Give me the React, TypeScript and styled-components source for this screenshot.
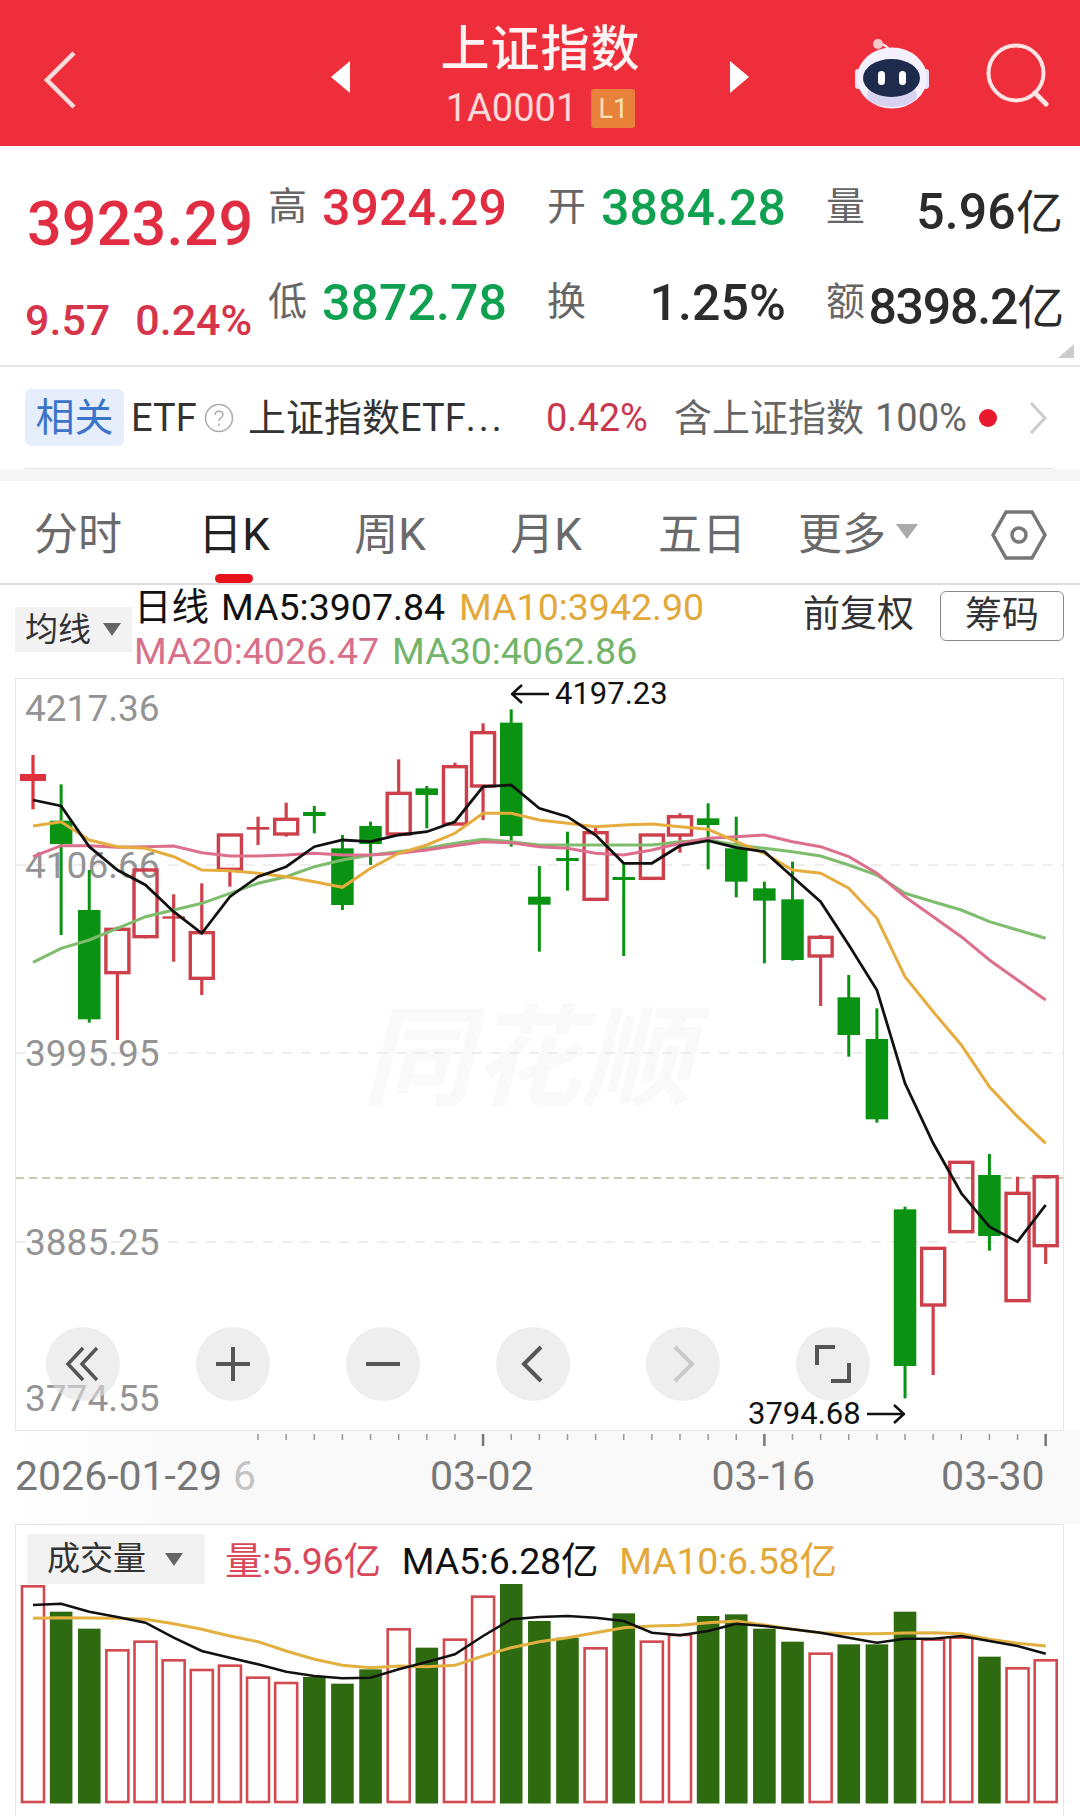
import React from "react";
import styled, { createGlobalStyle } from "styled-components";

const FONT = `Roboto, "Noto Sans CJK SC", "Noto Sans", sans-serif`;
const RED = "#e12d41";
const GREEN = "#0fa14f";
const DARK = "#2b2b2b";

const Global = createGlobalStyle`
  html, body { margin: 0; padding: 0; background: #fff; }
  body { font-family: ${FONT}; }
  * { box-sizing: border-box; }
`;

const Page = styled.div`
  width: 1080px;
  height: 1816px;
  overflow: hidden;
  background: #fff;
  display: flex;
  flex-direction: column;
`;

/* ---------- header ---------- */
const Header = styled.header`
  height: 146px;
  flex: none;
  background: #ee2f3b;
  display: flex;
  align-items: flex-start;
  color: #fff;
`;
const BackIcon = styled.svg`
  width: 32px;
  height: 60px;
  margin: 50px 0 0 44px;
  flex: none;
`;
const StepIcon = styled.svg`
  width: 20px;
  height: 32px;
  margin-top: 61px;
  flex: none;
`;
const PrevStep = styled(StepIcon)`
  margin-left: 255px;
`;
const TitleBlock = styled.div`
  width: 379px;
  flex: none;
  display: flex;
  flex-direction: column;
  align-items: center;
  padding-top: 21px;
`;
const Title = styled.div`
  font-size: 49px;
  line-height: 58px;
  font-weight: 500;
  letter-spacing: 1px;
  color: #fdf3f3;
`;
const SubRow = styled.div`
  display: flex;
  align-items: center;
  margin-top: 10px;
  gap: 14px;
`;
const Code = styled.span`
  font-size: 38px;
  line-height: 39px;
  color: rgba(255, 255, 255, 0.82);
`;
const LevelBadge = styled.span`
  width: 44px;
  height: 39px;
  background: #e8823a;
  border-radius: 3px;
  display: flex;
  align-items: center;
  justify-content: center;
  font-size: 27px;
  color: #f9e2b8;
`;
const RobotIcon = styled.svg`
  width: 80px;
  height: 72px;
  margin: 38px 0 0 102px;
  flex: none;
`;
const SearchIcon = styled.svg`
  width: 66px;
  height: 66px;
  margin: 41px 0 0 53px;
  flex: none;
`;

/* ---------- quote ---------- */
const Quote = styled.section`
  position: relative;
  height: 221px;
  flex: none;
  border-bottom: 2px solid #e6e6e6;
  display: flex;
  padding-left: 25px;
`;
const PriceCol = styled.div`
  width: 244px;
  flex: none;
`;
const MainPrice = styled.div`
  font-size: 61px;
  line-height: 70px;
  font-weight: 500;
  color: ${RED};
  margin: 43px 0 0 2px;
  letter-spacing: 0.2px;
`;
const Change = styled.div`
  font-size: 43px;
  line-height: 50px;
  font-weight: 500;
  color: #d5344a;
  margin-top: 36px;
  display: flex;
  gap: 25px;
`;
const Stats = styled.div`
  display: grid;
  grid-template-columns: 238px 238px 236px;
  column-gap: 41px;
  grid-auto-rows: 95px;
  padding-top: 15px;
`;
const Stat = styled.div`
  display: flex;
  align-items: center;
  justify-content: space-between;
  height: 94px;
`;
const StatLabel = styled.span`
  font-size: 39px;
  line-height: 46px;
  padding-bottom: 2px;
  margin-left: -1px;
  color: #666;
`;
const StatValue = styled.span<{ $c: string; $ls?: number }>`
  font-size: 50px;
  font-weight: 500;
  letter-spacing: ${(p) => p.$ls ?? 0.1}px;
  color: ${(p) => p.$c};
  white-space: nowrap;
`;
const Unit = styled.span`
  font-weight: 400;
  font-size: 47px;
`;
const Corner = styled.div`
  position: absolute;
  right: 6px;
  bottom: 7px;
  width: 0;
  height: 0;
  border-left: 16px solid transparent;
  border-bottom: 14px solid #ccc;
`;

/* ---------- etf row ---------- */
const EtfRow = styled.section`
  height: 102px;
  flex: none;
  margin: 0 26px 0 25px;
  border-bottom: 1px solid #e4e4e4;
  display: flex;
  align-items: center;
  font-size: 38px;
  white-space: nowrap;
`;
const Chip = styled.span`
  width: 99px;
  height: 57px;
  background: #e6eefc;
  border-radius: 6px;
  color: #3b74c8;
  font-size: 39px;
  line-height: 44px;
  display: flex;
  align-items: center;
  justify-content: center;
  flex: none;
`;
const EtfText = styled.span<{ $w: number; $ml: number; $c: string }>`
  width: ${(p) => p.$w}px;
  margin-left: ${(p) => p.$ml}px;
  color: ${(p) => p.$c};
  line-height: 44px;
  flex: none;
`;
const Dots = styled.span`
  letter-spacing: 3px;
`;
const HelpIcon = styled.svg`
  width: 30px;
  height: 30px;
  margin-left: 9px;
  flex: none;
`;
const Dot = styled.span`
  width: 18px;
  height: 18px;
  border-radius: 50%;
  background: #e8192c;
  margin-left: 14px;
  flex: none;
`;
const EtfChevron = styled.svg`
  width: 19px;
  height: 34px;
  margin-left: 32px;
  flex: none;
`;
const Gap = styled.div`
  height: 12px;
  flex: none;
  background: #f6f6f6;
`;

/* ---------- tabs ---------- */
const Tabs = styled.nav`
  height: 104px;
  flex: none;
  border-bottom: 2px solid #dedede;
  display: flex;
  align-items: flex-start;
  padding-right: 33px;
`;
const Tab = styled.div<{ $active?: boolean }>`
  position: relative;
  width: 156px;
  height: 102px;
  display: flex;
  align-items: center;
  justify-content: center;
  padding-bottom: 2px;
  font-size: 44px;
  color: ${(p) => (p.$active ? "#222" : "#6a6a6a")};
`;
const Underline = styled.span`
  position: absolute;
  left: 59px;
  bottom: 0;
  width: 38px;
  height: 9px;
  border-radius: 5px;
  background: #e8101a;
`;
const MoreTriangle = styled.span`
  width: 0;
  height: 0;
  margin-left: 10px;
  border-left: 11px solid transparent;
  border-right: 11px solid transparent;
  border-top: 15px solid #aaa;
`;
const HexIcon = styled.svg`
  width: 56px;
  height: 50px;
  margin: 29px 0 0 auto;
  flex: none;
`;

/* ---------- legend ---------- */
const Legend = styled.section`
  height: 93px;
  flex: none;
  padding: 0 16px 0 15px;
  display: flex;
  align-items: flex-start;
`;
const AvgChip = styled.div`
  width: 117px;
  height: 45px;
  margin-top: 22px;
  background: #f2f2f2;
  display: flex;
  align-items: center;
  padding-left: 10px;
  font-size: 33px;
  line-height: 40px;
  color: #333;
  flex: none;
`;
const ChipTriangle = styled.span<{ $ml: number; $c: string }>`
  width: 0;
  height: 0;
  margin-left: ${(p) => p.$ml}px;
  border-left: 9px solid transparent;
  border-right: 9px solid transparent;
  border-top: 13px solid ${(p) => p.$c};
`;
const MaBlock = styled.div`
  margin-left: 2px;
  display: flex;
  flex-direction: column;
  flex: 1;
`;
const MaRow = styled.div`
  height: 44px;
  display: flex;
  align-items: center;
  white-space: nowrap;
`;
const MaText = styled.span<{ $c: string; $ml?: number }>`
  font-size: 37.5px;
  line-height: 44px;
  color: ${(p) => p.$c};
  margin-left: ${(p) => p.$ml ?? 0}px;
`;
const AdjustGroup = styled.div`
  display: flex;
  align-items: flex-start;
  padding-top: 6px;
  flex: none;
`;
const AdjustText = styled.span`
  font-size: 37px;
  line-height: 40px;
  margin-top: 4px;
  color: #333;
`;
const OutlineButton = styled.div`
  width: 124px;
  height: 50px;
  margin-left: 26px;
  padding-bottom: 0;
  border: 1.5px solid #8a8a8a;
  border-radius: 6px;
  display: flex;
  align-items: center;
  justify-content: center;
  font-size: 37px;
  line-height: 40px;
  color: #333;
`;

/* ---------- chart ---------- */
const ChartPanel = styled.section`
  position: relative;
  height: 753px;
  width: 1049px;
  margin-left: 15px;
  flex: none;
  border: 1px solid #e6e6e6;
`;
const ChartSvg = styled.svg`
  display: block;
  width: 1047px;
  height: 751px;
`;
const Controls = styled.div`
  position: absolute;
  left: 30px;
  top: 648px;
  display: flex;
  gap: 76px;
`;
const RoundButton = styled.div`
  width: 74px;
  height: 74px;
  border-radius: 50%;
  background: rgba(225, 225, 225, 0.58);
  display: flex;
  align-items: center;
  justify-content: center;
`;
const ExtremeMark = styled.div<{ $l: number; $t: number }>`
  position: absolute;
  left: ${(p) => p.$l}px;
  top: ${(p) => p.$t}px;
  display: flex;
  align-items: center;
  gap: 6px;
  height: 30px;
  font-size: 31px;
  line-height: 30px;
  color: #111;
  white-space: nowrap;
`;

/* ---------- date axis ---------- */
const Axis = styled.section`
  height: 93px;
  flex: none;
  background: linear-gradient(90deg, #fff 0, #fff 12px, #f9f9f9 200px, #f9f9f9 100%);
`;
const TickSvg = styled.svg`
  display: block;
  width: 1080px;
  height: 18px;
`;
const DateRow = styled.div`
  height: 54px;
  display: flex;
  align-items: center;
  font-size: 41px;
  color: #777;
  padding-left: 15px;
  white-space: nowrap;
`;
const DateText = styled.span<{ $ml?: number; $c?: string }>`
  margin-left: ${(p) => p.$ml ?? 0}px;
  color: ${(p) => p.$c ?? "inherit"};
`;

/* ---------- volume ---------- */
const Volume = styled.section`
  flex: 1;
  width: 1049px;
  margin-left: 15px;
  background: #fff;
  border-top: 1px solid #e6e6e6;
  border-left: 1px solid #e6e6e6;
  border-right: 1px solid #e6e6e6;
  display: flex;
  flex-direction: column;
`;
const VolHeader = styled.div`
  height: 59px;
  flex: none;
  display: flex;
  align-items: flex-start;
  padding: 9px 0 0 11px;
`;
const VolChip = styled.div`
  width: 178px;
  height: 50px;
  background: #f2f2f2;
  display: flex;
  align-items: center;
  padding-left: 20px;
  font-size: 33px;
  line-height: 40px;
  color: #333;
  flex: none;
`;
const VolText = styled.span<{ $c: string; $ml: number }>`
  font-size: 37.5px;
  line-height: 54px;
  letter-spacing: -0.2px;
  margin-left: ${(p) => p.$ml}px;
  color: ${(p) => p.$c};
  white-space: nowrap;
`;
const VolSvg = styled.svg`
  display: block;
  width: 1047px;
  height: 233px;
`;

/* ---------- data ---------- */
const X = (i: number) => 33 + 28.13 * i;
const Y = (z: number) => 480 + z / 3;
type C = [number, number, number, number, "r" | "g", boolean?];
const candles: C[] = [
  [825, 988, 882, 903, "r", true],
  [913, 1365, 1022, 1092, "g"],
  [1170, 1628, 1290, 1618, "g"],
  [1340, 1680, 1348, 1478, "r"],
  [1165, 1375, 1170, 1370, "r"],
  [1243, 1445, 1309, 1316, "r", true],
  [1210, 1545, 1358, 1495, "r"],
  [1065, 1220, 1065, 1168, "r"],
  [1010, 1095, 1041, 1049, "r", true],
  [968, 1070, 1018, 1062, "r"],
  [978, 1060, 996, 1008, "g"],
  [1065, 1290, 1105, 1275, "g"],
  [1025, 1155, 1038, 1092, "g"],
  [838, 1065, 940, 1062, "r"],
  [918, 1045, 925, 945, "g"],
  [848, 1035, 860, 1032, "r"],
  [730, 1020, 758, 918, "r"],
  [688, 1100, 728, 1068, "g"],
  [1158, 1415, 1250, 1274, "g"],
  [1055, 1232, 1134, 1143, "g"],
  [1040, 1258, 1058, 1258, "r"],
  [1150, 1428, 1191, 1200, "g"],
  [1065, 1195, 1065, 1195, "r"],
  [1000, 1118, 1010, 1065, "r"],
  [970, 1168, 1015, 1035, "g"],
  [1010, 1252, 1105, 1205, "g"],
  [1205, 1450, 1225, 1262, "g"],
  [1145, 1442, 1258, 1440, "g"],
  [1365, 1578, 1372, 1428, "r"],
  [1485, 1730, 1552, 1665, "g"],
  [1585, 1928, 1677, 1918, "g"],
  [2180, 2755, 2188, 2658, "g"],
  [2305, 2685, 2305, 2475, "r"],
  [2045, 2255, 2047, 2255, "r"],
  [2022, 2312, 2085, 2268, "g"],
  [2090, 2462, 2140, 2462, "r"],
  [2090, 2352, 2090, 2297, "r"],
];
const ma5 = [960, 978, 1100, 1170, 1215, 1295, 1360, 1250, 1190, 1160, 1100, 1080, 1085, 1065, 1055, 1025, 920, 915, 985, 1010, 1065, 1150, 1150, 1097, 1082, 1103, 1115, 1190, 1265, 1395, 1530, 1810, 1990, 2140, 2240, 2285, 2175];
const ma10 = [1038, 1025, 1080, 1100, 1105, 1130, 1170, 1172, 1180, 1190, 1205, 1222, 1165, 1120, 1095, 1060, 1000, 1000, 1020, 1030, 1040, 1035, 1032, 1040, 1048, 1085, 1120, 1170, 1180, 1225, 1315, 1490, 1595, 1695, 1820, 1910, 1990];
const ma20 = [1130, 1097, 1097, 1102, 1100, 1098, 1118, 1128, 1128, 1125, 1120, 1125, 1125, 1120, 1110, 1097, 1085, 1088, 1100, 1105, 1120, 1125, 1110, 1090, 1075, 1070, 1065, 1085, 1100, 1130, 1180, 1250, 1310, 1370, 1440, 1500, 1560];
const ma30 = [1447, 1405, 1380, 1345, 1310, 1290, 1270, 1240, 1210, 1190, 1160, 1140, 1125, 1115, 1105, 1090, 1078, 1085, 1095, 1095, 1095, 1095, 1095, 1085, 1080, 1095, 1105, 1115, 1128, 1155, 1185, 1240, 1265, 1290, 1325, 1350, 1375];
const line = (a: number[]) => a.map((z, i) => `${X(i).toFixed(1)},${Y(z).toFixed(1)}`).join(" ");

const VY = (z: number) => 1480 + z / 3;
const vols: [number, "r" | "g"][] = [
  [316, "r"], [392, "g"], [443, "g"], [508, "r"], [482, "r"], [538, "r"], [567, "r"], [554, "r"], [590, "r"], [606, "r"],
  [588, "g"], [608, "g"], [565, "g"], [445, "r"], [500, "g"], [476, "r"], [347, "r"], [308, "g"], [420, "g"], [470, "g"],
  [502, "r"], [397, "g"], [482, "r"], [462, "r"], [405, "g"], [400, "g"], [443, "g"], [482, "g"], [518, "r"], [490, "g"],
  [490, "g"], [392, "g"], [476, "r"], [470, "r"], [527, "g"], [562, "r"], [538, "r"],
];
const vma5 = [372, 368, 392, 408, 425, 470, 510, 530, 550, 572, 585, 592, 590, 565, 543, 520, 465, 415, 408, 405, 410, 420, 455, 463, 450, 428, 435, 445, 455, 470, 485, 473, 473, 465, 480, 495, 518];
const vma10 = [412, 410, 411, 412, 415, 428, 445, 465, 482, 510, 535, 553, 560, 555, 557, 553, 525, 500, 482, 470, 455, 440, 435, 433, 425, 420, 432, 445, 455, 458, 458, 456, 455, 458, 475, 487, 495];
const vline = (a: number[]) => a.map((z, i) => `${X(i).toFixed(1)},${VY(z).toFixed(1)}`).join(" ");

const CANDLE_RED = "#cc3f4b";
const CANDLE_GREEN = "#0a9312";

const Candle: React.FC<{ c: C; i: number }> = ({ c, i }) => {
  const [h, l, t, b, col, solid] = c;
  const x = X(i);
  const color = col === "r" ? CANDLE_RED : CANDLE_GREEN;
  const top = Y(t);
  const bot = Y(b);
  const stroke = col === "r" ? 3.2 : 3;
  if (col === "r" && !solid) {
    return (
      <g>
        <line x1={x} x2={x} y1={Y(h)} y2={top} stroke={color} strokeWidth={stroke} />
        <line x1={x} x2={x} y1={bot} y2={Y(l)} stroke={color} strokeWidth={stroke} />
        <rect x={x - 11.5} y={top} width={23} height={bot - top} fill="none" stroke={color} strokeWidth={3.4} />
      </g>
    );
  }
  const w = i === 0 ? 26 : 22.5;
  const fill = i === 0 ? "#e0303c" : color;
  return (
    <g>
      <line x1={x} x2={x} y1={Y(h)} y2={Y(l)} stroke={fill} strokeWidth={stroke} />
      <rect x={x - w / 2} y={top} width={w} height={bot - top} fill={fill} />
    </g>
  );
};

const yLabels: [string, number][] = [
  ["4217.36", 708],
  ["4106.66", 865],
  ["3995.95", 1053],
  ["3885.25", 1242],
  ["3774.55", 1398],
];

const Chart = () => (
  <ChartSvg viewBox="16 679 1047 751">
    <text x="362" y="1097" fontSize="110" fontWeight="700" fontStyle="italic" fill="#f9f9f9" fontFamily={FONT}>同花顺</text>
    {[865, 1053, 1242].map((y) => (
      <line key={y} x1="16" x2="1063" y1={y} y2={y} stroke="#e9e9e9" strokeWidth="1.4" strokeDasharray="10 9" />
    ))}
    <line x1="16" x2="1063" y1="1178" y2="1178" stroke="#c9c9b4" strokeWidth="2" strokeDasharray="8 5" />
    {yLabels.map(([t, y]) => (
      <text key={t} x="25" y={y + 13} fontSize="37" fill="#949494" fontFamily={FONT}>{t}</text>
    ))}
    {candles.map((c, i) => (
      <Candle key={i} c={c} i={i} />
    ))}
    <polyline points={line(ma30)} fill="none" stroke="#7ebc6e" strokeWidth="3" />
    <polyline points={line(ma20)} fill="none" stroke="#dc6f8c" strokeWidth="3" />
    <polyline points={line(ma10)} fill="none" stroke="#e6ad3e" strokeWidth="3" />
    <polyline points={line(ma5)} fill="none" stroke="#111" strokeWidth="2.8" />
  </ChartSvg>
);

const CtrlIcon: React.FC<{ d: string; c?: string; w?: number }> = ({ d, c = "#555", w = 4 }) => (
  <svg width="44" height="44" viewBox="0 0 44 44" fill="none" stroke={c} strokeWidth={w}>
    <path d={d} />
  </svg>
);

const ArrowLeft = () => (
  <svg width="38" height="20" viewBox="0 0 38 20" fill="none" stroke="#111" strokeWidth="2.6">
    <path d="M38 10H1M11 1 1 10l10 9" />
  </svg>
);
const ArrowRight = () => (
  <svg width="38" height="20" viewBox="0 0 38 20" fill="none" stroke="#111" strokeWidth="2.6">
    <path d="M0 10h37M27 1l10 9-10 9" />
  </svg>
);

const ticks = Array.from({ length: 29 }, (_, k) => k + 8);
const major = new Set([16, 26, 36]);

export default function App() {
  return (
    <Page>
      <Global />
      <Header>
        <BackIcon viewBox="0 0 32 60" fill="none" stroke="#fbdcdc" strokeWidth="4.5">
          <path d="M30 3 3 30l27 27" />
        </BackIcon>
        <PrevStep viewBox="0 0 20 32" fill="#fff"><path d="M19 0v32L0 16z" /></PrevStep>
        <TitleBlock>
          <Title>上证指数</Title>
          <SubRow>
            <Code>1A0001</Code>
            <LevelBadge>L1</LevelBadge>
          </SubRow>
        </TitleBlock>
        <StepIcon viewBox="0 0 20 32" fill="#fff"><path d="M0 0v32l19-16z" /></StepIcon>
        <RobotIcon viewBox="0 0 80 72">
          <path d="M27 6c6 0 9 3 11 8" fill="none" stroke="#f3dfe6" strokeWidth="2.500" />
          <circle cx="26" cy="6" r="5" fill="#f7c9cf" />
          <rect x="3" y="31" width="6" height="20" rx="3" fill="#e6e2f6" />
          <rect x="71" y="31" width="6" height="20" rx="3" fill="#e6e2f6" />
          <ellipse cx="40" cy="40" rx="35" ry="30.500" fill="#f4f0fc" />
          <ellipse cx="40" cy="57" rx="25" ry="12" fill="#d9d3f2" />
          <ellipse cx="39.500" cy="40" rx="28.500" ry="19" fill="#1f2b4d" />
          <rect x="26" y="33" width="7" height="14" rx="3.500" fill="#fff" />
          <rect x="47" y="33" width="7" height="14" rx="3.500" fill="#fff" />
        </RobotIcon>
        <SearchIcon viewBox="0 0 66 66" fill="none" stroke="#fde3e3" strokeWidth="4">
          <circle cx="31" cy="32" r="27.500" />
          <path d="M50 52l11 11" strokeLinecap="round" strokeWidth="5" />
        </SearchIcon>
      </Header>

      <Quote>
        <PriceCol>
          <MainPrice>3923.29</MainPrice>
          <Change>
            <span>9.57</span>
            <span>0.24%</span>
          </Change>
        </PriceCol>
        <Stats>
          <Stat><StatLabel>高</StatLabel><StatValue $c={RED}>3924.29</StatValue></Stat>
          <Stat><StatLabel>开</StatLabel><StatValue $c={GREEN}>3884.28</StatValue></Stat>
          <Stat><StatLabel>量</StatLabel><StatValue $c={DARK}>5.96<Unit>亿</Unit></StatValue></Stat>
          <Stat><StatLabel>低</StatLabel><StatValue $c={GREEN}>3872.78</StatValue></Stat>
          <Stat><StatLabel>换</StatLabel><StatValue $c={DARK}>1.25%</StatValue></Stat>
          <Stat><StatLabel>额</StatLabel><StatValue $c={DARK} $ls={-1.2}>8398.2<Unit>亿</Unit></StatValue></Stat>
        </Stats>
        <Corner />
      </Quote>

      <EtfRow>
        <Chip>相关</Chip>
        <EtfText $w={64} $ml={7} $c="#333">ETF</EtfText>
        <HelpIcon viewBox="0 0 30 30" fill="none" stroke="#aaa" strokeWidth="1.5">
          <circle cx="15" cy="15" r="13.500" />
          <path d="M11 12c0-5 8-5 8-.5 0 3-4 3-4 6.500M15 20.500v2.500" />
        </HelpIcon>
        <EtfText $w={272} $ml={14} $c="#333">上证指数ETF<Dots>...</Dots></EtfText>
        <EtfText $w={115} $ml={26} $c="#c9374d">0.42%</EtfText>
        <EtfText $w={195} $ml={13} $c="#666">含上证指数</EtfText>
        <EtfText $w={90} $ml={6} $c="#666">100%</EtfText>
        <Dot />
        <EtfChevron viewBox="0 0 19 34" fill="none" stroke="#ccc" strokeWidth="3">
          <path d="M2 2l14 15L2 32" />
        </EtfChevron>
      </EtfRow>
      <Gap />

      <Tabs>
        <Tab>分时</Tab>
        <Tab $active>日K<Underline /></Tab>
        <Tab>周K</Tab>
        <Tab>月K</Tab>
        <Tab>五日</Tab>
        <Tab>更多<MoreTriangle /></Tab>
        <HexIcon viewBox="0 0 56 50" fill="none" stroke="#777" strokeWidth="3.500">
          <path d="M2 25 15 2h26l13 23-13 23H15z" />
          <circle cx="28" cy="25" r="7" />
        </HexIcon>
      </Tabs>

      <Legend>
        <AvgChip>均线<ChipTriangle $ml={12} $c="#666" /></AvgChip>
        <MaBlock>
          <MaRow>
            <MaText $c="#111">日线</MaText>
            <MaText $c="#111" $ml={12}>MA5:3907.84</MaText>
            <MaText $c="#e3a83a" $ml={14}>MA10:3942.90</MaText>
          </MaRow>
          <MaRow>
            <MaText $c="#d9708a">MA20:4026.47</MaText>
            <MaText $c="#72b56a" $ml={13}>MA30:4062.86</MaText>
          </MaRow>
        </MaBlock>
        <AdjustGroup>
          <AdjustText>前复权</AdjustText>
          <OutlineButton>筹码</OutlineButton>
        </AdjustGroup>
      </Legend>

      <ChartPanel>
        <Chart />
        <ExtremeMark $l={495} $t={0}><ArrowLeft /><span>4197.23</span></ExtremeMark>
        <ExtremeMark $l={732} $t={720}><span>3794.68</span><ArrowRight /></ExtremeMark>
        <Controls>
          <RoundButton><CtrlIcon d="M22 6 7 22l15 16M36 6 21 22l15 16" w={3.500} /></RoundButton>
          <RoundButton><CtrlIcon d="M5 22h34M22 5v34" /></RoundButton>
          <RoundButton><CtrlIcon d="M5 22h34" /></RoundButton>
          <RoundButton><CtrlIcon d="M30 5 13 22l17 17" /></RoundButton>
          <RoundButton><CtrlIcon d="M14 5l17 17-17 17" c="#c9c9c9" /></RoundButton>
          <RoundButton><CtrlIcon d="M24 5H6v18M20 39h18V21" /></RoundButton>
        </Controls>
      </ChartPanel>

      <Axis>
        <TickSvg viewBox="0 0 1080 18">
          {ticks.map((k) => (
            <line key={k} x1={X(k)} x2={X(k)} y1="3" y2={major.has(k) ? 15 : 9} stroke={major.has(k) ? "#777" : "#999"} strokeWidth={major.has(k) ? 2.5 : 1.5} />
          ))}
        </TickSvg>
        <DateRow>
          <DateText>2026-01-29</DateText>
          <DateText $ml={11} $c="#c4c4c4">6</DateText>
          <DateText $ml={174}>03-02</DateText>
          <DateText $ml={178}>03-16</DateText>
          <DateText $ml={126}>03-30</DateText>
        </DateRow>
      </Axis>

      <Volume>
        <VolHeader>
          <VolChip>成交量<ChipTriangle $ml={19} $c="#666" /></VolChip>
          <VolText $c="#d9485a" $ml={20}>量:5.96亿</VolText>
          <VolText $c="#111" $ml={21}>MA5:6.28亿</VolText>
          <VolText $c="#e3a83a" $ml={21}>MA10:6.58亿</VolText>
        </VolHeader>
        <VolSvg viewBox="16 1583 1047 233">
          {vols.map(([z, c], i) =>
            c === "r" ? (
              <rect key={i} x={X(i) - 11} y={VY(z)} width={22} height={1801 - VY(z)} fill="#fff" stroke="#d24a50" strokeWidth="2.6" />
            ) : (
              <rect key={i} x={X(i) - 11.3} y={VY(z)} width={22.600} height={1802.500 - VY(z)} fill="#2d6a10" />
            )
          )}
          <polyline points={vline(vma10)} fill="none" stroke="#e2b03f" strokeWidth="3" />
          <polyline points={vline(vma5)} fill="none" stroke="#111" strokeWidth="2.600" />
        </VolSvg>
      </Volume>
    </Page>
  );
}
